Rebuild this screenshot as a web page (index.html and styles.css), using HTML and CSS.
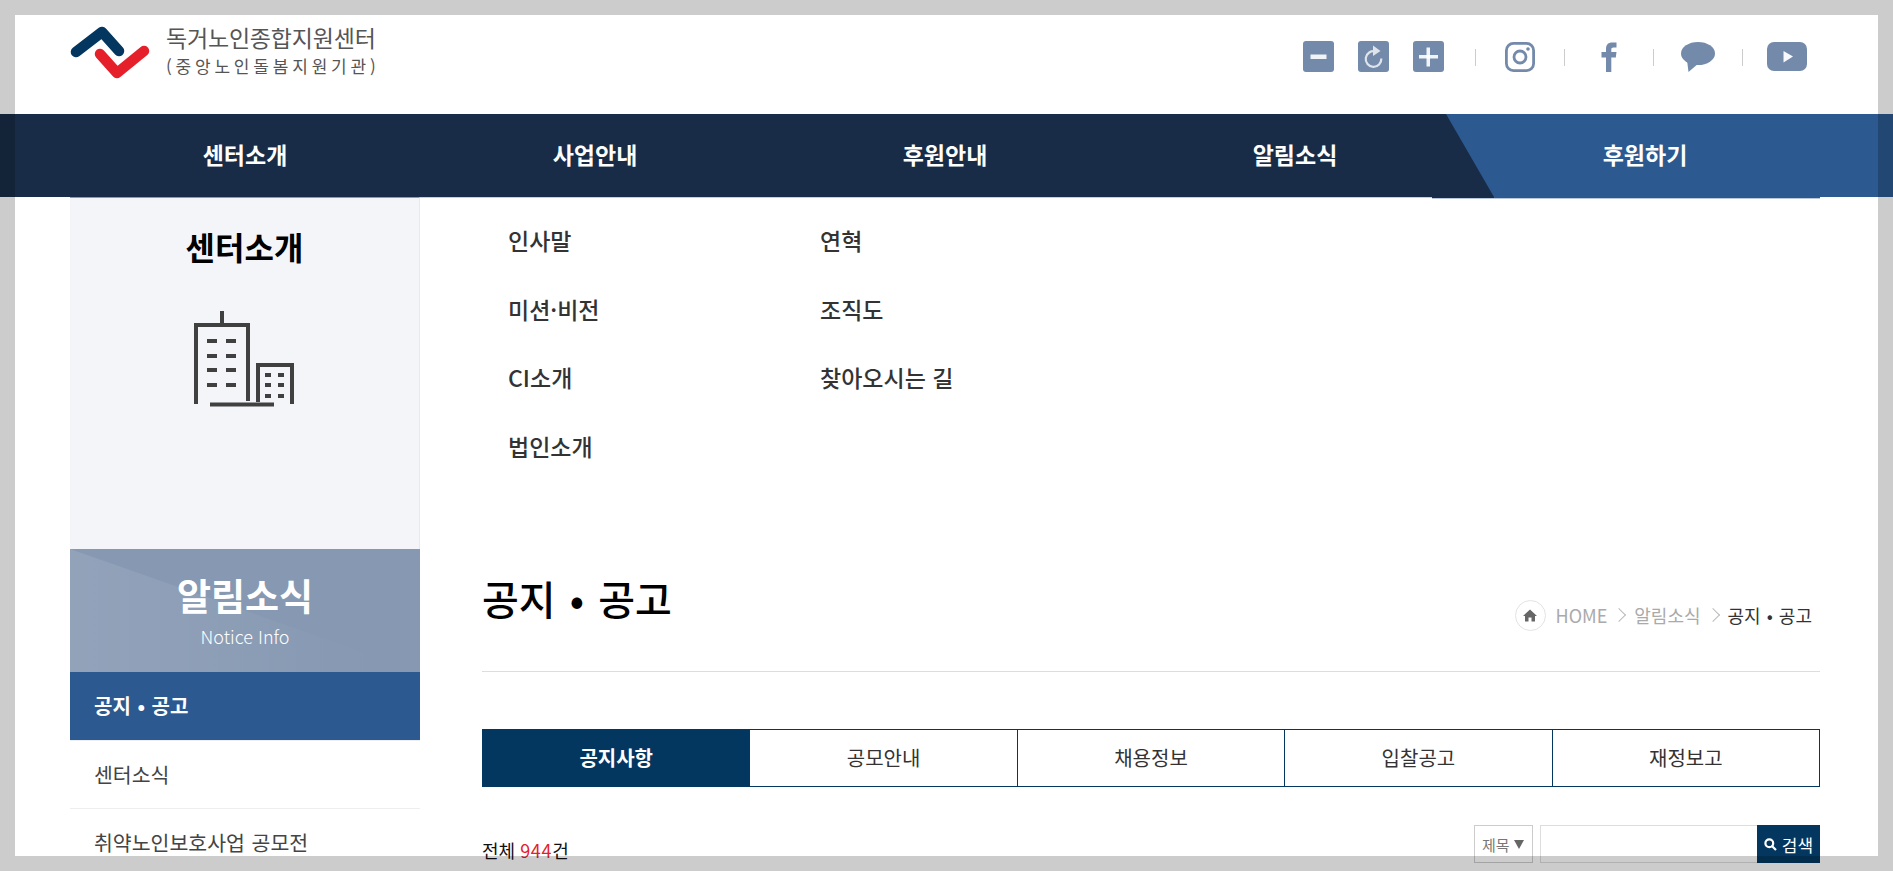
FILE: index.html
```html
<!DOCTYPE html>
<html lang="ko">
<head>
  <meta charset="UTF-8">
  <title>공지 • 공고 - 독거노인종합지원센터</title>
  <link rel="stylesheet" href="styles.css">
</head>
<body>
  <!-- Top header -->
  <header class="header">
    <a class="logo" href="#">
      <svg class="logo-mark" width="80" height="54" viewBox="0 0 80 54">
        <path d="M6 26 L32 6 L49 25" fill="none" stroke="#03375f" stroke-width="10.500" stroke-linecap="round" stroke-linejoin="round"/>
        <path d="M30 28 L47 47 L74 25" fill="none" stroke="#e5202a" stroke-width="10.500" stroke-linecap="round" stroke-linejoin="round"/>
      </svg>
      <span class="logo-text">
        <strong>독거노인종합지원센터</strong>
        <small>(중앙노인돌봄지원기관)</small>
      </span>
    </a>
    <div class="util">
      <div class="zoom-btns">
        <svg class="icon" width="31" height="31" viewBox="0 0 31 31"><rect width="31" height="31" rx="3" fill="#738aaa"/><rect x="7.500" y="13.500" width="16" height="4.500" fill="#fff" opacity=".9"/></svg>
        <svg class="icon" width="31" height="31" viewBox="0 0 31 31"><rect width="31" height="31" rx="3" fill="#738aaa"/><path d="M17.500 10.500 A7.800 7.800 0 1 0 23.300 17.500" fill="none" stroke="#dfe4ec" stroke-width="2.200"/><path d="M15 4.500 L22.500 10 L15 15 Z" fill="#dfe4ec"/></svg>
        <svg class="icon" width="31" height="31" viewBox="0 0 31 31"><rect width="31" height="31" rx="3" fill="#738aaa"/><rect x="13.500" y="6.500" width="3.500" height="19" fill="#fff" opacity=".9"/><rect x="6" y="14" width="19" height="3.500" fill="#fff" opacity=".9"/></svg>
      </div>
      <ul class="social">
        <li><svg class="icon" width="30" height="30" viewBox="0 0 30 30"><rect x="1.400" y="1.400" width="27.200" height="27.200" rx="7" fill="none" stroke="#738aaa" stroke-width="2.800"/><circle cx="15" cy="15" r="6" fill="none" stroke="#738aaa" stroke-width="2.800"/><circle cx="23" cy="7" r="1.800" fill="#738aaa"/></svg></li>
        <li><svg class="icon" width="16" height="30" viewBox="0 0 16 30"><path d="M5 30 V15.500 H0.500 V10 H5 V7 C5 2.500 7.500 0.500 11 0.500 H15.500 V5.500 H12.500 C10.800 5.500 10.300 6.200 10.300 7.600 V10 H15.500 L14.800 15.500 H10.300 V30 Z" fill="#738aaa"/></svg></li>
        <li><svg class="icon" width="34" height="30" viewBox="0 0 34 30"><ellipse cx="17" cy="11.500" rx="17" ry="11.500" fill="#738aaa"/><path d="M6 18 L7.500 30 L18 21 Z" fill="#738aaa"/></svg></li>
        <li><svg class="icon" width="40" height="29" viewBox="0 0 40 29"><rect width="40" height="29" rx="7" fill="#738aaa"/><path d="M16.500 9 L26 14.500 L16.500 20.500 Z" fill="#fff" opacity=".95"/></svg></li>
      </ul>
    </div>
  </header>

  <!-- Main navigation -->
  <nav class="gnb">
    <div class="gnb-donate-bg"></div>
    <ul class="gnb-list">
      <li>센터소개</li>
      <li>사업안내</li>
      <li>후원안내</li>
      <li>알림소식</li>
      <li>후원하기</li>
    </ul>
  </nav>

  <!-- Open dropdown panel -->
  <div class="wrap">
    <section class="mega">
      <div class="mega-side">
        <h2>센터소개</h2>
        <svg class="mega-icon" width="100" height="96" viewBox="0 0 100 96" fill="none" stroke="#404040">
          <path d="M2 93 V14 H54 V90" stroke-width="4"/>
          <path d="M28 0 V14" stroke-width="4"/>
          <path d="M16 93.500 H80" stroke-width="4"/>
          <path d="M64 91 V54 H98 V93" stroke-width="4"/>
          <path d="M13 30 h10 M32 30 h10 M13 45 h10 M32 45 h10 M13 59 h10 M32 59 h10 M13 74 h10 M32 74 h10" stroke-width="4"/>
          <path d="M71 64 h6 M84 64 h6 M71 74 h6 M84 74 h6 M71 85 h6 M84 85 h6" stroke-width="4"/>
        </svg>
      </div>
      <ul class="mega-col">
        <li>인사말</li>
        <li>미션·비전</li>
        <li>CI소개</li>
        <li>법인소개</li>
      </ul>
      <ul class="mega-col">
        <li>연혁</li>
        <li>조직도</li>
        <li>찾아오시는 길</li>
      </ul>
    </section>

    <div class="layout">
      <!-- Side menu -->
      <aside class="side">
        <div class="side-head">
          <h2>알림소식</h2>
          <p>Notice Info</p>
        </div>
        <ul class="side-menu">
          <li class="active">공지 • 공고</li>
          <li>센터소식</li>
          <li>취약노인보호사업 공모전</li>
        </ul>
      </aside>

      <!-- Board -->
      <main class="content">
        <div class="page-head">
          <h1>공지 • 공고</h1>
          <div class="crumbs">
            <span class="home">
              <svg width="14" height="13" viewBox="0 0 14 13"><path d="M7 0.500 L14 7 H12 V12.500 H8.500 V8.500 H5.500 V12.500 H2 V7 H0 Z" fill="#666"/></svg>
            </span>
            <span>HOME</span>
            <i class="chev"></i>
            <span>알림소식</span>
            <i class="chev"></i>
            <span class="current">공지 • 공고</span>
          </div>
        </div>

        <ul class="tabs">
          <li class="active">공지사항</li>
          <li>공모안내</li>
          <li>채용정보</li>
          <li>입찰공고</li>
          <li>재정보고</li>
        </ul>

        <div class="board-top">
          <p class="total">전체 <em>944</em>건</p>
          <form class="search">
            <span class="search-type">제목<i></i></span>
            <input class="search-input" type="text">
            <button class="search-btn" type="button">
              <svg width="13" height="13" viewBox="0 0 13 13" fill="none" stroke="#fff" stroke-width="2.200"><circle cx="5.300" cy="5.300" r="3.900"/><path d="M8.200 8.200 L12 12"/></svg>
              검색
            </button>
          </form>
        </div>
      </main>
    </div>
  </div>

  <!-- Translucent frame over the whole window -->
  <div class="frame"></div>
</body>
</html>
```

FILE: styles.css
```css
/* Global Styles */
html, body {
  height: 100%;
  overflow: hidden;
}

body {
  margin: 0;
  background-color: #fff;
  color: #333;
  font-family: "Noto Sans CJK KR", sans-serif;
}

ul {
  list-style: none;
  margin: 0;
  padding: 0;
}

h1, h2, p {
  margin: 0;
}

/* Window frame */
.frame {
  position: fixed;
  top: 0;
  right: 0;
  bottom: 0;
  left: 0;
  border: 15px solid rgba(0, 0, 0, 0.2);
  pointer-events: none;
}

/* Header */
.header {
  display: flex;
  justify-content: space-between;
  height: 114px;
  padding: 0 62px 0 70px;
  box-sizing: border-box;
}

.logo {
  display: flex;
  color: #555;
  text-decoration: none;
}

.logo-mark {
  margin-top: 26px;
}

.logo-text {
  display: flex;
  flex-direction: column;
  margin: 21px 0 0 16px;
}

.logo-text strong {
  font-size: 23px;
  font-weight: 400;
  letter-spacing: -0.2px;
  line-height: 32px;
}

.logo-text small {
  font-size: 17px;
  letter-spacing: 3.800px;
  line-height: 26px;
}

.util {
  display: flex;
  align-items: center;
  height: 31px;
  margin-top: 41px;
}

.zoom-btns {
  display: flex;
  gap: 24px;
  margin-right: 31px;
}

.icon {
  display: block;
}

/* Each social icon sits centred in a cell with a short rule on its left */
.social {
  display: flex;
}

.social li {
  position: relative;
  display: flex;
  align-items: center;
  justify-content: center;
  width: 89px;
}

.social li::before {
  content: "";
  position: absolute;
  top: 7px;
  left: 0;
  width: 1px;
  height: 17px;
  background-color: #ccc;
}

/* Main navigation */
.gnb {
  position: relative;
  height: 83px;
  background-color: #182c47;
}

.gnb-donate-bg {
  position: absolute;
  top: 0;
  right: 0;
  bottom: 0;
  width: 447px;
  background-color: #2c5990;
  clip-path: polygon(0 0, 100% 0, 100% 100%, 48px 100%);
}

/* One pixel overhang under the last items of the bar */
.gnb::after {
  content: "";
  position: absolute;
  top: 100%;
  left: 1432px;
  width: 388px;
  height: 1px;
  background: linear-gradient(to right, #182c47 62px, #2c5990 62px);
  box-shadow: 0 1px 0 #b9c8da;
}

.gnb-list {
  position: relative;
  display: grid;
  grid-template-columns: repeat(5, 350px);
  padding-left: 70px;
  color: #fff;
  font-size: 23px;
  font-weight: 700;
  line-height: 81px;
  text-align: center;
}

/* Page wrapper */
.wrap {
  padding: 0 73px 0 70px;
}

/* Open dropdown */
.mega {
  display: flex;
  height: 352px;
  border-top: 1px solid #c3cfde;
  box-sizing: border-box;
}

.mega-side {
  width: 350px;
  margin-top: -1px;
  background-color: #f4f5f9;
  border-top: 1px solid #8a9ab5;
  border-right: 1px solid #e8e8ee;
  box-sizing: border-box;
  text-align: center;
}

.mega-side h2 {
  padding-top: 25px;
  color: #000;
  font-size: 32px;
  font-weight: 700;
  line-height: 46px;
}

.mega-icon {
  display: block;
  margin: 42px auto 0;
  transform: translateX(-1px);
}

.mega-col {
  width: 312px;
  padding-top: 8px;
  font-size: 23px;
  font-weight: 500;
  line-height: 68.500px;
}

.mega-col:first-of-type {
  margin-left: 88px;
}

/* Side menu + board */
.layout {
  display: flex;
}

.side {
  flex: 0 0 350px;
}

.side-head {
  position: relative;
  height: 123px;
  padding-top: 22px;
  box-sizing: border-box;
  background-color: #8698b2;
  color: #fff;
  text-align: center;
}

/* Faint lighter wedge on the lower left */
.side-head::before {
  content: "";
  position: absolute;
  top: 0;
  right: 0;
  bottom: 0;
  left: 0;
  background: linear-gradient(to right, rgba(255, 255, 255, 0.1), transparent 90%);
  clip-path: polygon(0 0, 100% 100%, 0 100%);
}

.side-head h2,
.side-head p {
  position: relative;
}

.side-head h2 {
  font-size: 37px;
  font-weight: 700;
  line-height: 48px;
}

.side-head p {
  padding-top: 3px;
  font-size: 18px;
  font-weight: 300;
  line-height: 28px;
}

.side-menu li {
  height: 68px;
  padding-left: 24px;
  border-bottom: 1px solid #eee;
  box-sizing: border-box;
  color: #444;
  font-size: 20.500px;
  line-height: 67px;
  word-spacing: 1px;
}

.side-menu li.active {
  height: 69px;
  background-color: #2c5990;
  background-clip: padding-box;
  color: #fff;
  font-size: 20px;
  font-weight: 700;
}

.content {
  flex: 1;
  margin-left: 62px;
}

.page-head {
  display: flex;
  justify-content: space-between;
  height: 123px;
  border-bottom: 1px solid #ddd;
  box-sizing: border-box;
}

.page-head h1 {
  padding-top: 20px;
  color: #000;
  font-size: 40px;
  font-weight: 500;
  line-height: 58px;
  word-spacing: 3px;
}

.crumbs {
  display: flex;
  align-items: center;
  gap: 10px;
  height: 32px;
  margin: 50px 8px 0 0;
  color: #aaa;
  font-size: 18px;
}

.crumbs .current {
  color: #333;
  word-spacing: 1px;
}

.home {
  display: flex;
  align-items: center;
  justify-content: center;
  width: 31px;
  height: 31px;
  border: 1px solid #e3e3e3;
  border-radius: 50%;
  box-sizing: border-box;
}

.chev {
  width: 9px;
  height: 9px;
  margin-left: -3px;
  border-top: 1px solid #bbb;
  border-right: 1px solid #bbb;
  transform: rotate(45deg);
}

/* Tabs */
.tabs {
  display: grid;
  grid-template-columns: repeat(5, 1fr);
  height: 58px;
  margin-top: 57px;
  border: 1px solid #03375f;
  border-left: 0;
  box-sizing: border-box;
}

.tabs li {
  border-left: 1px solid #03375f;
  color: #333;
  font-size: 20px;
  line-height: 56px;
  text-align: center;
}

.tabs li.active {
  background-color: #03375f;
  color: #fff;
  font-weight: 700;
}

/* List top */
.board-top {
  display: flex;
  justify-content: space-between;
  margin-top: 38px;
}

.total {
  margin-top: 12px;
  color: #111;
  font-size: 18px;
  line-height: 26px;
}

.total em {
  color: #e5202a;
  font-style: normal;
  letter-spacing: 0.700px;
}

.search {
  display: flex;
  height: 38px;
}

.search-type {
  display: flex;
  align-items: center;
  gap: 4px;
  width: 59px;
  margin-right: 7px;
  padding-left: 7px;
  border: 1px solid #ccc;
  box-sizing: border-box;
  color: #777;
  font-size: 15px;
}

.search-type i {
  border-top: 9px solid #666;
  border-left: 5px solid transparent;
  border-right: 5px solid transparent;
}

.search-input {
  width: 217px;
  padding: 0;
  border: 1px solid #ddd;
  border-right: 0;
  box-sizing: border-box;
}

.search-btn {
  display: flex;
  align-items: center;
  justify-content: center;
  gap: 5px;
  width: 63px;
  padding: 0;
  border: none;
  background-color: #03375f;
  color: #fff;
  font-family: inherit;
  font-size: 17px;
}
```
